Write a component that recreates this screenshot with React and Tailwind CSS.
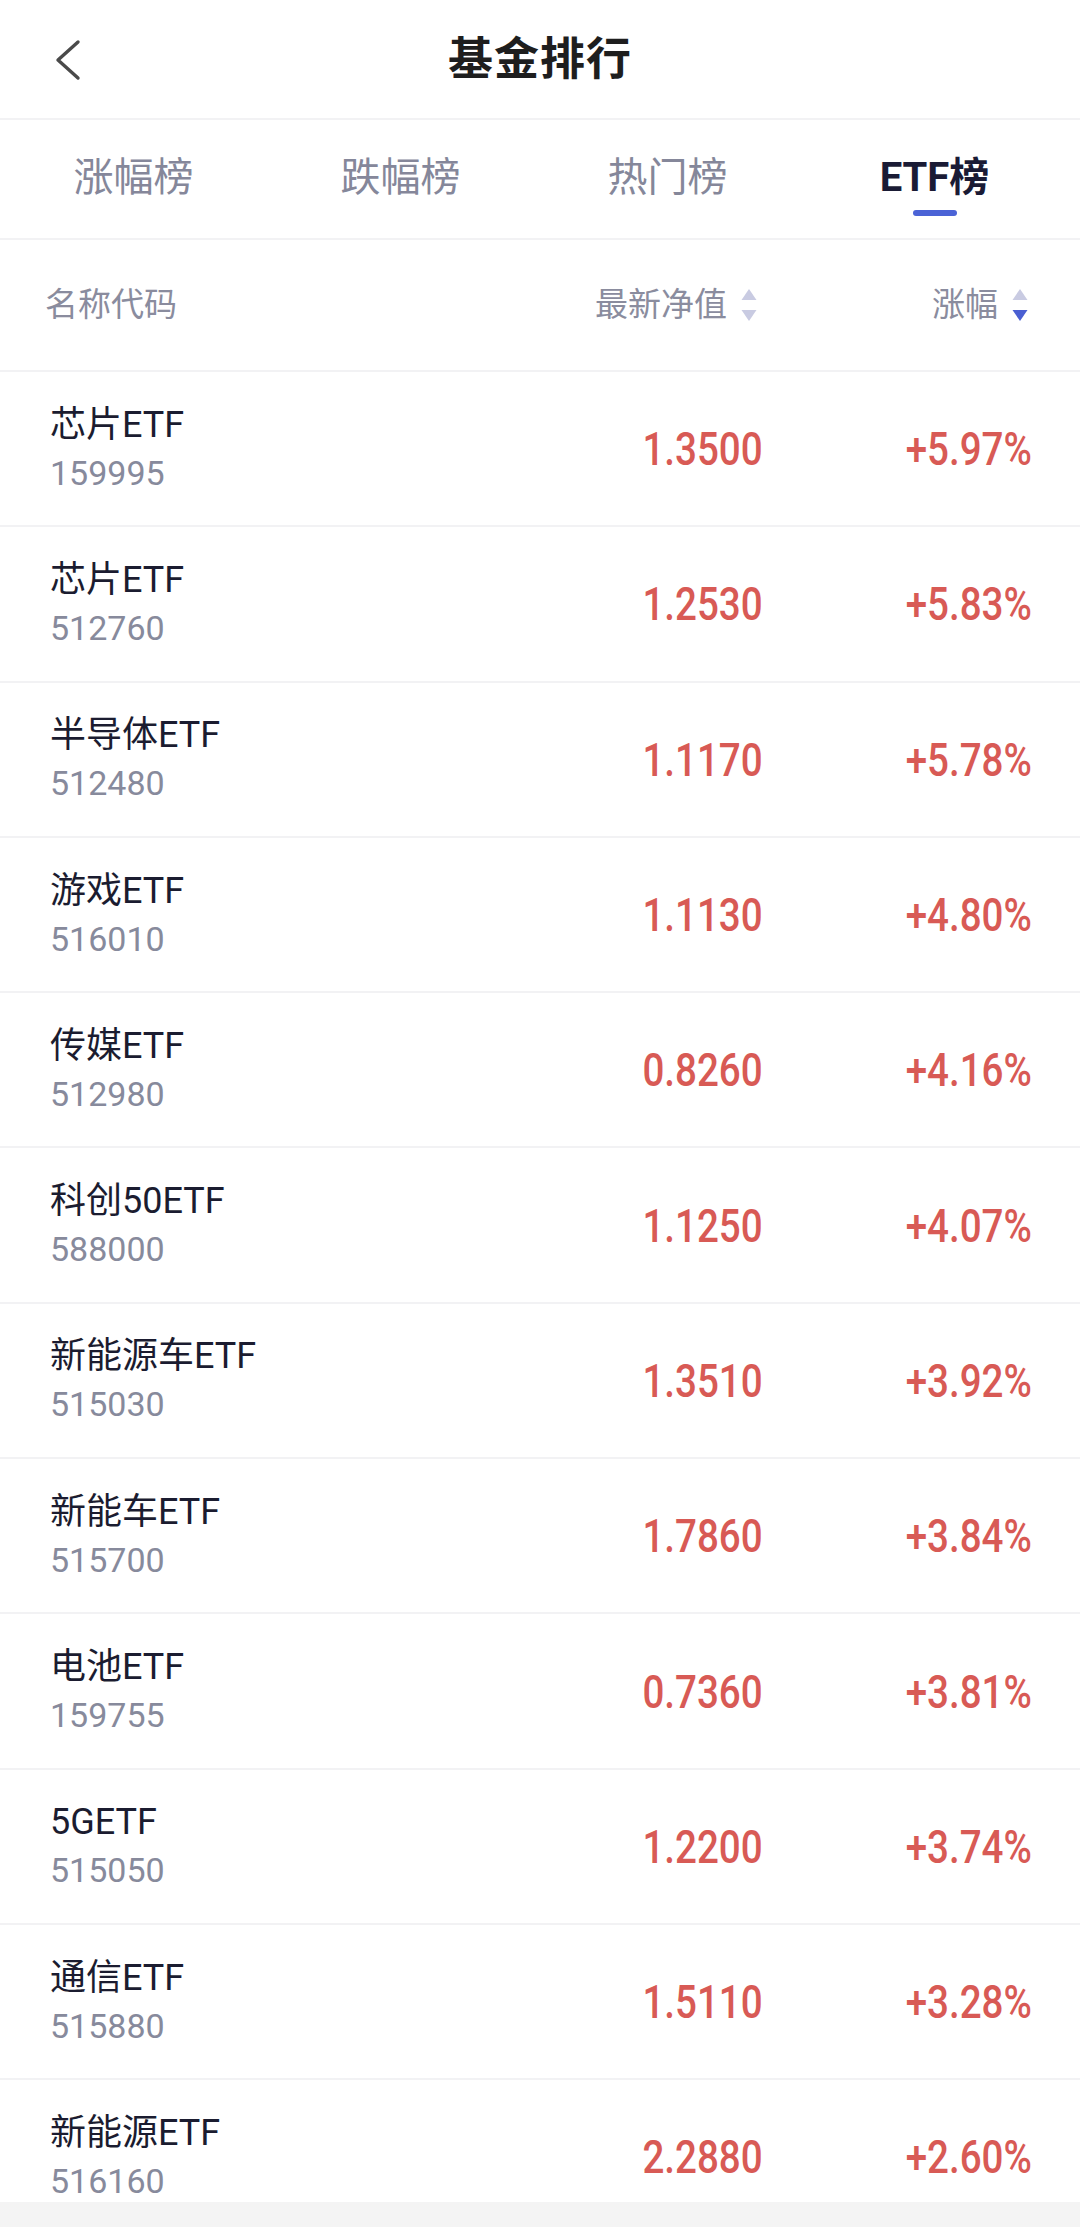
import React from "react";

const FONT = { fontFamily: 'Roboto, "Noto Sans CJK SC", sans-serif' };

const funds = [
  { name: "芯片ETF", code: "159995", nav: "1.3500", pct: "+5.97%" },
  { name: "芯片ETF", code: "512760", nav: "1.2530", pct: "+5.83%" },
  { name: "半导体ETF", code: "512480", nav: "1.1170", pct: "+5.78%" },
  { name: "游戏ETF", code: "516010", nav: "1.1130", pct: "+4.80%" },
  { name: "传媒ETF", code: "512980", nav: "0.8260", pct: "+4.16%" },
  { name: "科创50ETF", code: "588000", nav: "1.1250", pct: "+4.07%" },
  { name: "新能源车ETF", code: "515030", nav: "1.3510", pct: "+3.92%" },
  { name: "新能车ETF", code: "515700", nav: "1.7860", pct: "+3.84%" },
  { name: "电池ETF", code: "159755", nav: "0.7360", pct: "+3.81%" },
  { name: "5GETF", code: "515050", nav: "1.2200", pct: "+3.74%" },
  { name: "通信ETF", code: "515880", nav: "1.5110", pct: "+3.28%" },
  { name: "新能源ETF", code: "516160", nav: "2.2880", pct: "+2.60%" },
];

const tabs = ["涨幅榜", "跌幅榜", "热门榜", "ETF榜"];

// little up/down sort arrows next to column titles
const SortIcon = ({ active }) => (
  <svg width="16" height="32" viewBox="0 0 16 32" className="ml-[14px]">
    <polygon points="8,0 15.5,11 0.5,11" fill="#c9cbe2" />
    <polygon points="0.5,21 15.5,21 8,32" fill={active ? "#4a5fd2" : "#c9cbe2"} />
  </svg>
);

// numbers in the reference use a narrow, tall digit face
const Num = ({ children }) => (
  <span className="inline-block origin-right scale-x-[0.82] text-[47px] font-medium leading-none text-[#d85a55]">
    {children}
  </span>
);

export default function App() {
  return (
    <div className="h-[2227px] w-[1080px] flex flex-col overflow-hidden bg-white" style={FONT}>
      {/* Header */}
      <div className="h-[120px] shrink-0 grid grid-cols-[1fr_auto_1fr] items-center border-b-2 border-[#f2f2f4]">
        <div className="pl-[54px] pt-[2px]">
          <svg width="28" height="42" viewBox="0 0 28 42">
            <polyline
              points="24,3 4,21 24,39"
              fill="none"
              stroke="#4a4a4a"
              strokeWidth="3.4"
              strokeLinecap="round"
              strokeLinejoin="round"
            />
          </svg>
        </div>
        <div className="text-[45px] font-bold text-[#1e1e1e] leading-none tracking-[1px]">基金排行</div>
        <div />
      </div>

      {/* Tabs */}
      <div className="h-[120px] shrink-0 grid grid-cols-4 pr-3 border-b-2 border-[#f2f2f4]">
        {tabs.map((t, i) => {
          const active = i === 3;
          return (
            <div key={t} className="flex flex-col items-center pt-[38px]">
              <div
                className={
                  active
                    ? "text-[40px] leading-[40px] font-bold text-[#1a1b35]"
                    : "text-[40px] leading-[40px] text-[#85879a]"
                }
              >
                {t}
              </div>
              <div
                className={
                  active
                    ? "mt-[12px] h-[6px] w-[44px] rounded-full bg-[#4b63d6]"
                    : "mt-[12px] h-[6px] w-[44px]"
                }
              />
            </div>
          );
        })}
      </div>

      {/* Column titles */}
      <div className="h-[132px] shrink-0 flex items-center pl-[45px] pr-[52px] border-b-2 border-[#f2f2f4] text-[33px] text-[#8a8c9e]">
        <div className="flex-1">名称代码</div>
        <div className="flex items-center justify-end pr-[6px]">
          最新净值
          <SortIcon />
        </div>
        <div className="w-[265px] flex items-center justify-end">
          涨幅
          <SortIcon active />
        </div>
      </div>

      {/* Fund rows */}
      <div className="flex-1 min-h-0 overflow-hidden">
        {funds.map((f, i) => (
          <div
            key={i}
            className="h-[155.3px] flex items-center pl-[50px] pr-[48px] border-b-2 border-[#f2f2f4]"
          >
            <div className="flex-1 flex flex-col">
              <div className="text-[36px] leading-[48px] text-[#1b1c30]">{f.name}</div>
              <div className="text-[34px] leading-[48px] text-[#878a9c]">{f.code}</div>
            </div>
            <div className="text-right">
              <Num>{f.nav}</Num>
            </div>
            <div className="w-[269px] text-right">
              <Num>{f.pct}</Num>
            </div>
          </div>
        ))}
      </div>

      <div className="h-[25px] shrink-0 bg-[#f4f4f4]" />
    </div>
  );
}
